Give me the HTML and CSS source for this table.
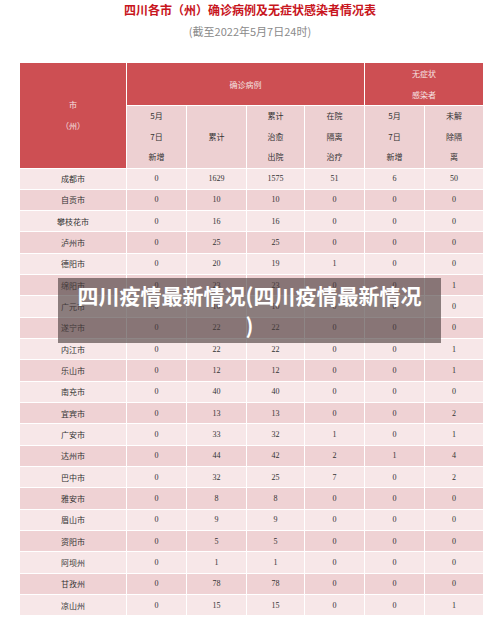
FILE: index.html
```html
<!DOCTYPE html>
<html lang="zh-CN">
<head>
<meta charset="utf-8">
<link rel="stylesheet" href="styles.css">
</head>
<body>
<div class="page">
  <h1 class="title">四川各市（州）确诊病例及无症状感染者情况表</h1>
  <p class="subtitle">(截至2022年5月7日24时)</p>
  <table class="tbl">
    <colgroup>
      <col class="c1"><col class="c2"><col class="c3"><col class="c4"><col class="c5"><col class="c6"><col class="c7">
    </colgroup>
    <thead>
      <tr class="h1">
        <th rowspan="2" class="red">市<br>（州）</th>
        <th colspan="4" class="red">确诊病例</th>
        <th colspan="2" class="red">无症状<br>感染者</th>
      </tr>
      <tr class="h2">
        <th>5月<br>7日<br>新增</th>
        <th>累计</th>
        <th>累计<br>治愈<br>出院</th>
        <th>在院<br>隔离<br>治疗</th>
        <th>5月<br>7日<br>新增</th>
        <th>未解<br>除隔<br>离</th>
      </tr>
    </thead>
    <tbody>
      <tr><td class="city">成都市</td><td>0</td><td>1629</td><td>1575</td><td>51</td><td>6</td><td>50</td></tr>
      <tr><td class="city">自贡市</td><td>0</td><td>10</td><td>10</td><td>0</td><td>0</td><td>0</td></tr>
      <tr><td class="city">攀枝花市</td><td>0</td><td>16</td><td>16</td><td>0</td><td>0</td><td>0</td></tr>
      <tr><td class="city">泸州市</td><td>0</td><td>25</td><td>25</td><td>0</td><td>0</td><td>0</td></tr>
      <tr><td class="city">德阳市</td><td>0</td><td>20</td><td>19</td><td>1</td><td>0</td><td>0</td></tr>
      <tr><td class="city">绵阳市</td><td>0</td><td>23</td><td>23</td><td>0</td><td>0</td><td>1</td></tr>
      <tr><td class="city">广元市</td><td>0</td><td>10</td><td>10</td><td>0</td><td>0</td><td>0</td></tr>
      <tr><td class="city">遂宁市</td><td>0</td><td>22</td><td>22</td><td>0</td><td>0</td><td>0</td></tr>
      <tr><td class="city">内江市</td><td>0</td><td>22</td><td>22</td><td>0</td><td>0</td><td>1</td></tr>
      <tr><td class="city">乐山市</td><td>0</td><td>12</td><td>12</td><td>0</td><td>0</td><td>1</td></tr>
      <tr><td class="city">南充市</td><td>0</td><td>40</td><td>40</td><td>0</td><td>0</td><td>0</td></tr>
      <tr><td class="city">宜宾市</td><td>0</td><td>13</td><td>13</td><td>0</td><td>0</td><td>2</td></tr>
      <tr><td class="city">广安市</td><td>0</td><td>33</td><td>32</td><td>1</td><td>0</td><td>1</td></tr>
      <tr><td class="city">达州市</td><td>0</td><td>44</td><td>42</td><td>2</td><td>1</td><td>4</td></tr>
      <tr><td class="city">巴中市</td><td>0</td><td>32</td><td>25</td><td>7</td><td>0</td><td>2</td></tr>
      <tr><td class="city">雅安市</td><td>0</td><td>8</td><td>8</td><td>0</td><td>0</td><td>0</td></tr>
      <tr><td class="city">眉山市</td><td>0</td><td>9</td><td>9</td><td>0</td><td>0</td><td>0</td></tr>
      <tr><td class="city">资阳市</td><td>0</td><td>5</td><td>5</td><td>0</td><td>0</td><td>0</td></tr>
      <tr><td class="city">阿坝州</td><td>0</td><td>1</td><td>1</td><td>0</td><td>0</td><td>0</td></tr>
      <tr><td class="city">甘孜州</td><td>0</td><td>78</td><td>78</td><td>0</td><td>0</td><td>0</td></tr>
      <tr><td class="city">凉山州</td><td>0</td><td>15</td><td>15</td><td>0</td><td>0</td><td>1</td></tr>
    </tbody>
  </table>
  <div class="overlay">四川疫情最新情况(四川疫情最新情况<br>)</div>
</div>
</body>
</html>
```

FILE: styles.css
```css
html, body {
  margin: 0;
  padding: 0;
  background: #ffffff;
}
.page {
  position: relative;
  width: 500px;
  height: 622px;
  overflow: hidden;
  font-family: "Noto Sans CJK SC", "Noto Sans", sans-serif;
}
.title {
  margin: 0;
  padding-top: 1px;
  height: 22px;
  line-height: 18px;
  text-align: center;
  font-size: 12px;
  font-weight: bold;
  color: #c8151d;
}
.subtitle {
  margin: 0;
  height: 39px;
  line-height: 16px;
  text-align: center;
  font-size: 11px;
  color: #8a8a8a;
}
.tbl {
  margin-left: 19px;
  width: 464px;
  table-layout: fixed;
  border-collapse: collapse;
  font-size: 8px;
  color: #333;
}
.c1 { width: 107px; }
.c2 { width: 60px; }
.c3 { width: 60px; }
.c4 { width: 58px; }
.c5 { width: 60px; }
.c6 { width: 60px; }
.c7 { width: 59px; }
.tbl th, .tbl td {
  border: 1px solid #ffffff;
  padding: 0;
  text-align: center;
  font-weight: normal;
}
.tbl th {
  background: #edd0d2;
  line-height: 20.5px;
  font-size: 8px;
  color: #333;
}
.tbl th.red {
  background: #cd4f53;
  color: #f6e2e2;
  line-height: 21px;
}
.h1 { height: 42px; }
.h2 { height: 62px; }
.tbl tbody tr { height: 21.33px; }
.tbl td {
  font-family: "Liberation Serif", "DejaVu Serif", serif;
  font-size: 8px;
  color: #333;
}
.tbl td.city {
  font-family: "Noto Sans CJK SC", "Noto Sans", sans-serif;
  font-size: 8px;
}
.tbl tbody tr:nth-child(odd) td { background: #f7e7e8; }
.tbl tbody tr:nth-child(even) td { background: #efd2d4; }
.overlay {
  position: absolute;
  left: 58px;
  top: 278px;
  width: 363px;
  height: 63px;
  padding: 2px 10px 0;
  background: rgba(72, 60, 60, 0.62);
  color: #ffffff;
  font-size: 21px;
  font-weight: bold;
  line-height: 30px;
  text-align: center;
  font-family: "Noto Sans CJK SC", "Noto Sans", sans-serif;
}
```
